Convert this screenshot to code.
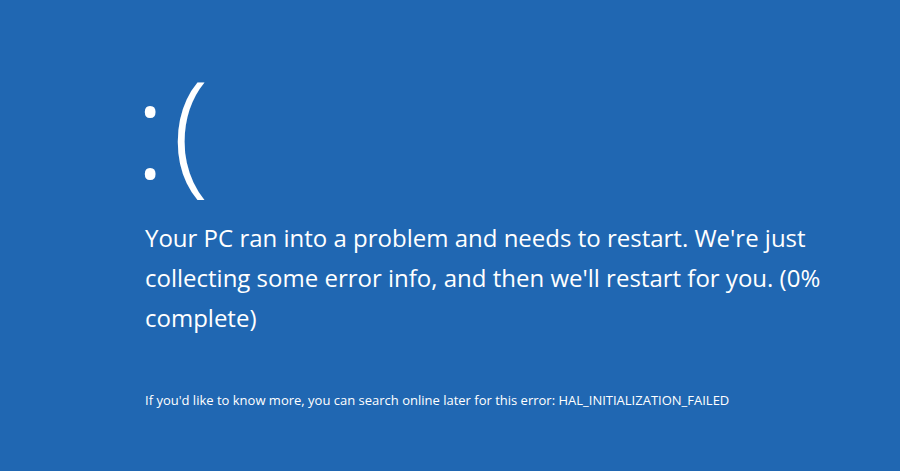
export default function App() {
  return (
    <div className="h-[471px] w-[900px] overflow-hidden bg-[#2067b2] text-white font-['Open_Sans',sans-serif]">
      <div className="pl-[145px] pt-[60px]">
        <div className="-ml-[11px] text-[135px] font-light leading-none tracking-[6px]">:(</div>
        <div className="mt-[23px] text-[24px] leading-[40px]">
          <p className="whitespace-nowrap">Your PC ran into a problem and needs to restart. We're just</p>
          <p className="whitespace-nowrap">collecting some error info, and then we'll restart for you. (0%</p>
          <p className="whitespace-nowrap">complete)</p>
        </div>
        <p className="mt-[53px] text-[13px] whitespace-nowrap">
          If you'd like to know more, you can search online later for this error: HAL_INITIALIZATION_FAILED
        </p>
      </div>
    </div>
  );
}
